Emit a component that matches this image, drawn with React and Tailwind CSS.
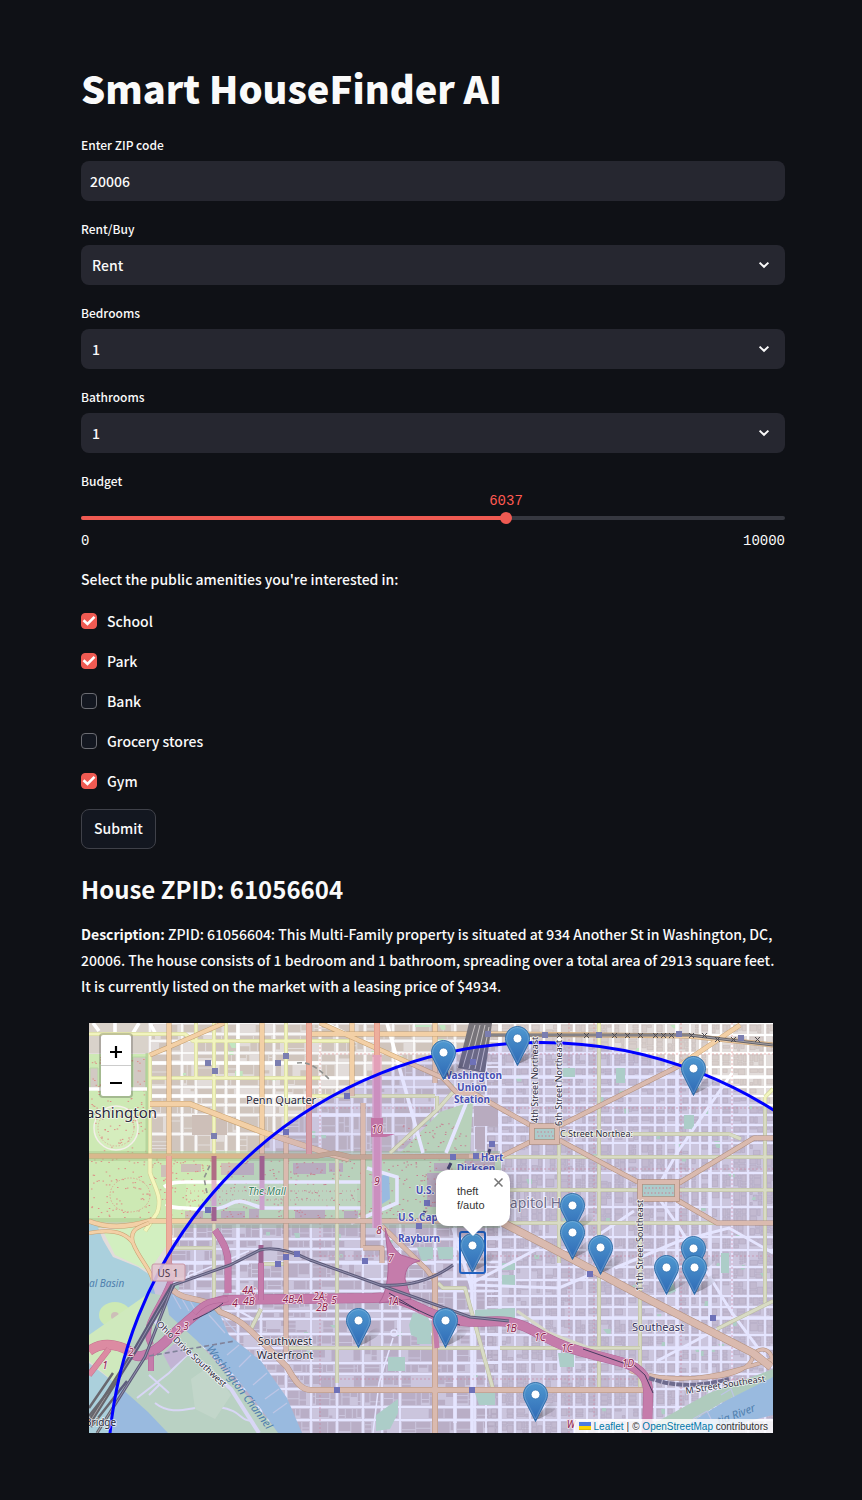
import { useState } from "react";

const bodyFont = "font-['Noto_Sans_CJK_SC',sans-serif]";

/* ---------- form controls ---------- */

function Field({ id, label, children }) {
  return (
    <div className="flex flex-col gap-1">
      <label htmlFor={id} className="text-[12px] font-medium leading-6">
        {label}
      </label>
      {children}
    </div>
  );
}

function SelectField({ id, label, options }) {
  return (
    <Field id={id} label={label}>
      <div className="relative">
        <select
          id={id}
          className="h-10 w-full appearance-none rounded-lg bg-[#262730] pl-[11px] pr-10 text-[14px] font-medium text-[#fafafa] outline-none"
        >
          {options.map((o) => (
            <option key={o}>{o}</option>
          ))}
        </select>
        <svg
          className="pointer-events-none absolute right-[13px] top-3 size-4"
          viewBox="0 0 16 16"
          fill="none"
          stroke="#fafafa"
          strokeWidth="2"
          aria-hidden="true"
        >
          <path d="M3.600 5.600 8 9.800l4.400-4.200" />
        </svg>
      </div>
    </Field>
  );
}

function BudgetSlider() {
  const max = 10000;
  const [value, setValue] = useState(6037);
  const pct = `${(value / max) * 100}%`;
  return (
    <div>
      <label htmlFor="budget" className="block text-[12px] font-medium leading-6">
        Budget
      </label>
      <div className="relative h-4 font-['Liberation_Mono',monospace] text-[14px] leading-4 text-[#ff5a52]">
        <output htmlFor="budget" className="absolute top-0 -translate-x-1/2" style={{ left: pct }}>
          {value}
        </output>
      </div>
      <div className="relative mt-[7px] h-1 rounded-full bg-[#363840]">
        <div className="h-1 rounded-full bg-[#ef5a52]" style={{ width: pct }} />
        <input
          id="budget"
          type="range"
          min="0"
          max={max}
          value={value}
          onChange={(e) => setValue(Number(e.target.value))}
          className="absolute -left-1.5 -top-1 h-3 w-[calc(100%+12px)] appearance-none bg-transparent outline-none [&::-webkit-slider-thumb]:size-3 [&::-webkit-slider-thumb]:appearance-none [&::-webkit-slider-thumb]:rounded-full [&::-webkit-slider-thumb]:bg-[#ef5a52]"
        />
      </div>
      <div className="mt-[13px] flex justify-between font-['Liberation_Mono',monospace] text-[14px] leading-4">
        <span>0</span>
        <span>{max}</span>
      </div>
    </div>
  );
}

function Check({ label, checked }) {
  return (
    <label className="flex h-6 items-center gap-[10px] text-[14px] font-medium">
      <span className="relative flex size-4">
        <input
          type="checkbox"
          defaultChecked={checked}
          className="peer size-4 appearance-none rounded border border-[#6b6c72] bg-[#131720] checked:border-[#ef5a52] checked:bg-[#ef5a52]"
        />
        <svg
          className="pointer-events-none absolute inset-0 hidden size-4 peer-checked:block"
          viewBox="0 0 16 16"
          fill="none"
          stroke="#fff"
          strokeWidth="2.600"
          aria-hidden="true"
        >
          <path d="M2.500 7.200 6.500 10.900 13.500 3.900" />
        </svg>
      </span>
      {label}
    </label>
  );
}

/* ---------- map drawing ---------- */

function makeRandom(seed) {
  let s = seed;
  return () => {
    s = (s * 16807) % 2147483647;
    return s / 2147483647;
  };
}

// Fills the cells of a street grid with small building footprints.
function buildings(xs, ys, seed, step) {
  const rnd = makeRandom(seed);
  let d = "";
  for (let i = 0; i < xs.length - 1; i++) {
    for (let j = 0; j < ys.length - 1; j++) {
      const x0 = xs[i] + 2;
      const x1 = xs[i + 1] - 2;
      const y0 = ys[j] + 2;
      const y1 = ys[j + 1] - 2;
      for (let x = x0; x < x1 - 2; ) {
        const w = Math.min(2 + rnd() * step, x1 - x);
        for (let y = y0; y < y1 - 2; ) {
          const h = Math.min(2 + rnd() * step, y1 - y);
          if (rnd() > 0.16) d += `M${x.toFixed(1)} ${y.toFixed(1)}h${w.toFixed(1)}v${h.toFixed(1)}h${(-w).toFixed(1)}z`;
          y += h + 1;
        }
        x += w + 1;
      }
    }
  }
  return d;
}

const dtGridX = [61, 80, 93, 107, 125, 137, 149, 173, 185, 197, 220, 231, 248, 263, 276, 288, 304, 325, 346, 366, 386, 411];
const dtGridY = [0, 11, 18, 30, 40, 55, 64, 73, 82, 92, 111, 131];
const eastX = [397, 411, 426, 441, 455, 470, 485, 498, 510, 524, 538, 551, 566, 577, 588, 601, 611, 621, 632, 643, 659, 676, 690];
const eastY = [0, 12, 30, 44, 54, 64, 73, 82, 92, 102, 111, 120, 134, 150, 167, 184, 200, 214, 227, 244, 257, 273, 284, 295, 312, 325, 339, 351, 366, 384, 397, 412];
const swX = [80, 106, 125, 149, 172, 197, 222, 248, 274, 293, 311, 346, 366, 386, 411];
const swY = [200, 216, 226, 239, 256, 268, 288, 296, 311, 325, 340, 351, 366, 384, 397, 412];

const eastBuildings = buildings(eastX, eastY, 77, 6);
const dtBuildings = buildings(dtGridX, dtGridY, 31, 17);
const swBuildings = buildings(swX, swY, 58, 13);

const grid = (xs, ys, x0, x1, y0, y1) =>
  xs.map((x) => `M${x} ${y0}V${y1}`).join("") + ys.map((y) => `M${x0} ${y}H${x1}`).join("");

const major = {
  motorway: ["#c4708c", "#dc8ba2"],
  trunk: ["#d99080", "#edae9d"],
  primary: ["#c6a070", "#f3d0a6"],
  secondary: ["#cdcf92", "#f1f4be"],
};

function Road({ kind, d, w = 4 }) {
  const [edge, fill] = major[kind];
  return (
    <g fill="none" strokeLinejoin="round">
      <path d={d} stroke={edge} strokeWidth={w + 1} />
      <path d={d} stroke={fill} strokeWidth={w} />
    </g>
  );
}

function Rail({ d, w = 3 }) {
  return (
    <g fill="none">
      <path d={d} stroke="#67656b" strokeWidth={w} />
      <path d={d} stroke="#b4b0b4" strokeWidth="0.800" />
    </g>
  );
}

const stations = [
  [119, 40], [126, 48], [189, 40], [197, 33], [125, 113], [197, 109], [119, 187], [258, 73], [384, 39],
  [403, 121], [364, 134], [387, 133], [338, 180], [330, 203], [276, 238], [248, 367], [383, 367],
  [197, 234], [208, 231], [189, 241], [501, 251], [624, 295], [456, 12], [510, 12], [590, 11], [652, 15], [399, 11],
];

const railCrosses = [470, 497, 525, 538, 551, 566, 574, 582, 602, 615, 628, 644, 668];

const trees = (() => {
  const rnd = makeRandom(19);
  const areas = [[2, 136, 275, 196], [280, 136, 408, 198], [2, 34, 56, 130], [312, 100, 380, 130], [60, 330, 150, 408], [12, 284, 40, 302]];
  let d = "";
  areas.forEach(([a, b, c, e]) => {
    const n = ((c - a) * (e - b)) / 45;
    for (let i = 0; i < n; i++) {
      d += `M${(a + rnd() * (c - a)).toFixed(1)} ${(b + rnd() * (e - b)).toFixed(1)}h1.500`;
    }
  });
  return d;
})();

const greens = (() => {
  const rnd = makeRandom(43);
  let d = "";
  for (let i = 0; i < 90; i++) {
    const x = 85 + rnd() * 590;
    const y = rnd() * 400;
    if (x < 280 && y > 130 && y < 200) continue;
    d += `M${x.toFixed(0)} ${y.toFixed(0)}h${(2 + rnd() * 6).toFixed(1)}v${(2 + rnd() * 5).toFixed(1)}h-4z`;
  }
  return d;
})();

function StreetMap() {
  return (
    <svg
      className="absolute inset-0 size-full font-['Noto_Sans',sans-serif]"
      viewBox="0 0 684 410"
      preserveAspectRatio="xMinYMin slice"
      role="img"
      aria-label="Street map of central Washington"
    >
      <rect width="684" height="410" fill="#e2dcda" />

      {/* blocks and minor streets */}
      <path d={dtBuildings} fill="#d0c5bd" />
      <path d={swBuildings} fill="#cec2c0" />
      <path d={eastBuildings} fill="#d8cecb" stroke="#c4b8b6" strokeWidth="0.500" />
      <path d={greens} fill="#c2e6c0" />
      <g fill="none" stroke="#fff">
        <path d={grid(eastX, eastY, 397, 684, 0, 410)} strokeWidth="1.800" />
        <path d={grid([411, 470, 588, 621], [54, 295, 325], 397, 684, 0, 410)} strokeWidth="3.600" />
        <path d={grid(dtGridX, dtGridY, 61, 411, 0, 131)} strokeWidth="1.500" />
        <path d="M149 0V131M61 40H231M61 73H231M222 92H411M222 55H411" strokeWidth="3.600" />
        <path d={grid(swX, swY, 80, 411, 200, 410)} strokeWidth="1.800" />
        <path d="M149 200V285M366 200V400M248 240H346M84 240H160M383 250V410" strokeWidth="3.600" />
      </g>
      <path d={grid([592, 643, 505, 231, 480], [31, 85, 146, 233, 356], 231, 684, 0, 410)} fill="none" stroke="#e39a9a" strokeWidth="0.700" strokeDasharray="2 2" />

      {/* parks */}
      <g fill="#cde9b4">
        <path d="M0 31H59V131H0z" />
        <path d="M0 135H278V199H0z" />
        <path d="M278 135H412V200H278z" />
        <path d="M311 130 351 89 384 78 381 130z" />
      </g>
      <g fill="#c0e5c2">
        <path d="M328 224h16v12h-12zM348 224h16v12h-14zM320 302l4-12 14 2 6 14-8 12-14-6zM328 310h14v11h-14zM299 334h17v14h-17zM287 392l22-16v14l-8 16-14 2z" />
        <path d="M413 240h13v7h-13zM413 252h13v10h-13zM386 287l40-2v10l-40 2zM386 370h20v12h-16zM469 330h16v14h-14zM474 45h12v9h-12zM527 45h9v15h-9zM595 92h10v14h-10zM632 230h8v20h-8zM583 258l4 10-8 4zM326 2h16v2h-16z" />
      </g>
      <path d="M0 0H59V30H0z" fill="#d9d2ca" />
      <path d="M1 45h8v22h-8zM44 34h13v34h-13z" fill="#d2c9c3" stroke="#b7dba4" />
      <circle cx="27" cy="105" r="22" fill="#d5edbd" stroke="#f3efe9" strokeWidth="1.500" />
      <circle cx="27" cy="105" r="18" fill="none" stroke="#dd9c8c" strokeWidth="0.700" strokeDasharray="1.500 1.500" />
      <ellipse cx="41" cy="172" rx="20" ry="17" fill="none" stroke="#dd9c8c" strokeWidth="0.800" strokeDasharray="1.500 1.500" />
      <g fill="#cdbfb8">
        <path d="M92 141h20v8h-20zM132 140h33v12h-33zM204 140h33v11h-33zM72 142h8v12h-8zM96 188h18v8h-18zM132 188h24v7h-24zM206 187h30v9h-30zM160 186h10v10h-10zM338 150h28v34h-28zM345 140h16v8h-16zM376 136h30v14h-30zM240 140h14v9h-14zM255 188h14v8h-14z" />
        <path d="M385 83h24v20h-24zM386 104h10v22h-10zM103 92h24v20h-24zM118 96h20v16h-20z" />
      </g>
      <path d="M97 160h171v25H97z" fill="#d3edb9" />
      <path d="M97 168h171M97 177h171" stroke="#dd9c8c" strokeWidth="0.700" strokeDasharray="1 3" />
      <path d={trees} stroke="#de8f86" strokeWidth="1" />
      <path d="M0 133H411M0 200H411" stroke="#a9c98e" strokeWidth="10" opacity="0.500" />
      <path d="M59 30V133" stroke="#a9c98e" strokeWidth="5" opacity="0.600" />

      {/* water */}
      <g fill="#aad0dd">
        <path d="M0 197H6L14 217 24 234 49 244 61 252 67 274 48 304 41 312 0 314z" />
        <path d="M292 153 300 150 301 176 293 181z" />
      </g>
      <path d="M61 200 14 208 26 232 60 248 78 222 80 200z" fill="#d2efc0" />
      <ellipse cx="26" cy="292" rx="16" ry="13" fill="#cde9b4" />
      <circle cx="26" cy="293" r="4" fill="#cdbfb8" />
      <path d="M0 312 60 270 78 273 110 320 160 375 190 410 78 410 31 364 0 338z" fill="#cfe9bd" />
      <g fill="#abd0dc">
        <path d="M76 270 108 276 130 290 140 312 172 338 198 375 213 410H189L172 386 145 352 105 315 80 292z" />
        <path d="M0 340 31 364 59 389 79 410H0z" />
        <path d="M584 410 638 377 684 352V392L652 400 640 410z" />
      </g>
      <path d="M566 400 620 370 684 346V354L632 380 584 410H560z" fill="#c3e2b6" />
      <g stroke="#d3dce2" strokeWidth="1.200" fill="none">
        <path d="M120 292l16 18M128 288l20 22M150 322l-12 10M162 332l-12 12M178 350l-14 12M190 366l-14 10M198 380l-14 10M604 396l14-8 4 8M632 372l10-6 3 8" />
        <path d="M84 272l8 14M92 274l8 14M100 276l8 14" />
      </g>
      <path d="M66 298 100 330 142 366 170 410" stroke="#f1eff4" strokeWidth="4" fill="none" />
      <path d="M48 375 80 350 102 328M66 380c20 16 40 0 64 4s20 14 34 14M60 352 80 370M70 362l-10 10" stroke="#f1eff4" strokeWidth="2" fill="none" />
      <path d="M74 331 88 318 98 332 82 346z" fill="#d8c9d0" />
      <path d="M102 356l20-14 20 30-16 24-20-10z" fill="#d9efc4" />

      {/* white avenues */}
      <g fill="none" stroke="#fff" strokeWidth="3.600">
        <path d="M298 0 334 130M236 0 276 20M378 78 357 130M364 205 383 266M61 0 66 10M0 66H58M26 0V10M4 0l6 8M50 0l-6 10" />
        <path d="M97 159H274M97 185c20 2 34 2 44-4 14-8 24 5 38 4H274M97 159c-8 0-16 0-22 5M97 185c-8 0-16 0-20-4M278 145 308 154V180L262 200" />
        <path d="M505 215 545 188M571 177 590 204 643 290 684 345M571 160 588 130 643 50M526 245 590 218 640 205 684 230M383 260 450 225M385 262 470 265 510 248M568 338 640 300" strokeWidth="3" />
      </g>
      <g fill="none" stroke="#fff" strokeWidth="1.500">
        <path d="M80 262 102 252 160 228M146 285 168 298 149 288zM304 315 290 360 284 410M309 296v14" />
        <circle cx="103" cy="252" r="4" />
        <circle cx="305" cy="310" r="3" />
      </g>

      {/* secondary roads */}
      <Road kind="secondary" w={3} d="M0 11H96L104 18H231M61 55H231M61 30V131M107 0V55M125 0V131M137 0V55M197 0V110M221 18H263M221 73H346" />
      <Road kind="secondary" w={3} d="M510 0V366M470 121V240M551 178V366M676 74V280M470 111H640L652 116M411 134H684M411 167H549M590 167H684M411 200H684M676 74 684 66" />
      <Road kind="secondary" w={3} d="M301 130 348 87 364 69M348 87V73M248 135V360M125 200V275M80 225H125M170 241H197M198 325H391M349 260 354 265H376L404 366M411 325H551M172 286 160 310M628 306 684 278" />
      <path d="M61 131V150C66 165 74 175 68 190L56 208" stroke="#cdcf92" strokeWidth="4.500" fill="none" />
      <path d="M61 131V150C66 165 74 175 68 190L56 208" stroke="#f4f6bd" strokeWidth="3.500" fill="none" />
      <path d="M428 288 460 310 500 325" stroke="#eef0c0" strokeWidth="3" fill="none" />

      {/* primary roads */}
      <Road kind="primary" w={4} d="M80 0V131M173 0V131M197 110V330M263 0V73M274 80V225M346 0V60M61 32 80 24 135 0" />
      <Road kind="primary" w={5} d="M61 81H101L173 109 241 131 260 136" />
      <Road kind="primary" w={4} d="M221 11H411L600 13 684 22M231 0 354 55 368 70H384L441 102M470 103 588 44 651 2M413 133 441 119M470 117 549 159M590 160 665 115H684M588 177 628 200H684" />
      <Road kind="primary" w={4} d="M0 133H228L245 130 262 134 411 133M0 198C20 206 40 204 60 198H411M293 203 338 247 346 258M274 225H293V240" />
      <Road kind="primary" w={5} d="M84 267C96 280 118 272 131 289 150 296 158 304 168 314L198 344C206 358 212 367 222 367H555M346 250V410" />
      <Road kind="primary" w={3} d="M541 348C560 356 600 356 624 354S661 344 664 334 682 322 684 340M0 210C20 206 36 208 44 220 50 236 62 246 64 258M44 220C40 206 50 204 60 200M560 352C600 362 640 350 684 336" />
      <Road kind="primary" w={7} d="M414 200 451 219 551 272 664 330 682 344" />
      <path d="M443 103H468V119H443zM551 159H588V176H551z" fill="#c0e3c6" stroke="#c6a070" strokeWidth="5.500" />
      <path d="M443 103H468V119H443zM551 159H588V176H551z" fill="none" stroke="#f3d0a6" strokeWidth="4" />
      <path d="M448 109h15M449 113h16M556 165h28M555 170h30" stroke="#de8f86" strokeWidth="1.200" strokeDasharray="1.500 2" />
      <path d="M0 133H228L245 130 262 134 380 133" stroke="#a88c5f" strokeWidth="4" opacity="0.350" fill="none" />

      {/* trunk roads and freeways */}
      <Road kind="trunk" w={5} d="M80 133V258M220 0V131M288 0V40" />
      <path d="M288 32V205" stroke="#e3a0b8" strokeWidth="9" fill="none" />
      <path d="M284 34V205M292 34V205" stroke="#f0c9d6" strokeWidth="1" fill="none" />
      <Road kind="motorway" w={6} d="M126 207C136 222 140 230 139 245V270" />
      <path d="M125 133v24M125 184v14M173 133v24M172 222v20" stroke="#b06c84" strokeWidth="5" />
      <path d="M125 157v26M173 157v30" stroke="#e3b6c8" strokeWidth="5" />
      <path d="M282 95h12v16h12l-9 3h-15z" fill="#d8829c" />
      <Road kind="motorway" w={9} d="M0 328C16 316 36 324 44 331S70 326 81 314C95 302 112 282 136 277L284 275C312 272 330 286 344 291 380 304 400 296 420 299 440 302 451 314 478 324 500 332 526 336 541 342 558 350 560 362 559 376L558 410" />
      <Road kind="motorway" w={5} d="M172 240V277M62 330V348M84 250C78 280 50 300 62 322M0 352 20 326M105 290C118 276 126 278 139 276" />
      <path d="M296 205C300 218 304 226 312 232L331 238C320 240 316 246 316 256L322 276 290 280C298 270 300 250 299 234z" fill="#dc8ba2" stroke="#c4708c" />
      <path d="M345 290 348 325" stroke="#dc8ba2" strokeWidth="5" />
      <path d="M309 278 344 294 371 302M300 270 330 288M494 326 540 342M104 297C120 290 130 284 134 280M545 342 556 352 564 370" stroke="#3f3a45" strokeWidth="0.900" fill="none" />

      {/* railways */}
      <Rail w={5} d="M0 400 48 324 84 262" />
      <Rail w={3} d="M8 410 56 334 84 262 141 242 171 227Q190 222 221 237L291 262 381 294 420 298" />
      <Rail w={3} d="M291 262C320 264 345 256 364 242" />
      <path d="M0 385 24 350M0 393 32 352M2 404 38 358" stroke="#69686f" strokeWidth="2.500" />
      <path d="M369 45 380 0H403L396 50z" fill="#77747a" />
      <path d="M374 44 386 2M380 46 391 2M386 46 396 2M391 48 400 4" stroke="#c9c4c6" strokeWidth="1" />
      <Rail w={3} d="M400 12H600L684 22" />
      <path d="M560 355C585 364 610 364 640 356" stroke="#7b7882" strokeWidth="4" strokeDasharray="6 1" fill="none" />
      <path d="M208 40C222 38 232 48 242 58M118 170 115 155 122 140M60 333 146 318" stroke="#8f918f" strokeWidth="1.600" strokeDasharray="5 3" fill="none" />
      {railCrosses.map((x) => (
        <path key={x} d={`M${x - 2} ${x > 620 ? 14 : 10}l5 5m0-5l-5 5`} stroke="#4e4b50" strokeWidth="1" />
      ))}

      {stations.map(([x, y]) => (
        <rect key={`${x}-${y}`} x={x - 3} y={y - 3} width="6" height="6" fill="#7b7eb0" />
      ))}
      <path d="M401 126l-2 6M362 140l-3 6M336 188l-2 5" stroke="#4a4a60" strokeWidth="3" />

      {/* search radius */}
      <circle cx="452" cy="452.500" r="433" fill="#0000ff" fillOpacity="0.100" stroke="#0000ff" strokeWidth="3" />

      {/* labels */}
      <g paintOrder="stroke" stroke="#ffffff" strokeOpacity="0.750" strokeWidth="1.600" strokeLinejoin="round" fill="#2b2a3c">
        <g fontSize="11">
          <text x="157" y="81">Penn Quarter</text>
          <text x="569" y="308" textAnchor="middle" fill="#34325c">Southeast</text>
          <text x="196" y="322" textAnchor="middle">Southwest</text>
          <text x="196" y="336" textAnchor="middle">Waterfront</text>
          <text x="-4" y="403" fontSize="10">Bridge</text>
        </g>
        <text x="-3" y="95" fontSize="15">ashington</text>
        <text x="412" y="185" fontSize="14" fill="#6c6a8a">Capitol H</text>
        <g fontSize="9">
          <text x="471" y="114">C Street Northea:</text>
          <text transform="translate(449 100) rotate(-90)">4th Street Northeast</text>
          <text transform="translate(473 103) rotate(-90)">6th Street Northeast</text>
          <text transform="translate(554 268) rotate(-90)">11th Street Southeast</text>
          <text transform="translate(597 371) rotate(-9)">M Street Southeast</text>
          <text transform="translate(67 302) rotate(43)">Ohio Drive Southwest</text>
        </g>
        <g fontSize="10" fontWeight="700" fill="#4650b4" textAnchor="middle">
          <text x="383" y="56">Washington</text>
          <text x="383" y="68">Union</text>
          <text x="383" y="80">Station</text>
          <text x="403" y="138">Hart</text>
          <text x="387" y="149">Dirksen</text>
          <text x="336" y="171">U.S.</text>
          <text x="330" y="219">Rayburn</text>
          <text x="309" y="198" textAnchor="start">U.S. Cap</text>
        </g>
        <text x="178" y="172" fontSize="10" fontStyle="italic" textAnchor="middle" fill="#38805f">The Mall</text>
      </g>
      <g fontStyle="italic" fontSize="10" fill="#4f7fae">
        <text x="0" y="264">al Basin</text>
        <text transform="translate(117 326) rotate(53)" fontSize="11">Washington Channel</text>
        <text transform="translate(630 402) rotate(-21)" fontSize="11">tia River</text>
      </g>
      <rect x="63" y="241" width="33" height="17" rx="2" fill="#e2c6cf" fillOpacity="0.900" stroke="#c795a4" />
      <text x="79" y="254" fontSize="10" textAnchor="middle" fill="#4a3447">US 1</text>
      <g fontStyle="italic" fontSize="10" textAnchor="middle" fill="#8d1f4c" paintOrder="stroke" stroke="#f3dfea" strokeWidth="1.600">
        {[
          ["10", 288, 110], ["9", 288, 162], ["8", 290, 211], ["7", 302, 239], ["1A", 304, 282], ["5", 245, 281],
          ["2A;", 231, 277], ["2B", 233, 288], ["4B-A", 204, 280], ["4A;", 160, 271], ["4B", 160, 282], ["4", 146, 284],
          ["3", 97, 307], ["2", 89, 311], ["2", 42, 333], ["1", 16, 346], ["1B", 422, 309], ["1C", 451, 318],
          ["1C", 478, 329], ["1D", 539, 344], ["W", 482, 405],
        ].map(([t, x, y]) => (
          <text key={`${t}${x}`} x={x} y={y}>
            {t}
          </text>
        ))}
      </g>
    </svg>
  );
}

// Centre of each pin's white dot, in map pixels.
const pins = [
  [428, 15], [354, 29], [604, 45], [483, 182], [483, 209], [383, 222], [511, 224], [604, 225],
  [577, 244], [605, 244], [269, 297], [356, 297], [446, 371],
];

function Pin({ x, y, index }) {
  const selected = x === 383;
  return (
    <button
      type="button"
      aria-label={`Incident ${index + 1}`}
      className={
        selected
          ? "absolute h-[43px] w-[27px] rounded-[3px] border-2 border-[#1f5fc0]"
          : "absolute h-[43px] w-[27px] border-2 border-transparent"
      }
      style={{ left: x - 13, top: y - 14 }}
    >
      <svg className="-ml-px h-[41px] w-[25px] max-w-none overflow-visible" viewBox="0 0 25 41" aria-hidden="true">
        <defs>
          <linearGradient id="pinFill" x1="0" y1="0" x2="0" y2="1">
            <stop offset="0" stopColor="#4f98d0" />
            <stop offset="1" stopColor="#2e69b5" />
          </linearGradient>
          <linearGradient id="pinShade" x1="0" y1="1" x2="1" y2="0">
            <stop offset="0" stopColor="#000" stopOpacity="0.350" />
            <stop offset="1" stopColor="#000" stopOpacity="0" />
          </linearGradient>
        </defs>
        <path d="M12.500 38C18 30 25 20 31 20c6 1 2 8-4 11-5 3-9 5-14.500 7z" fill="url(#pinShade)" />
        <path
          d="M12.500.5C5.900.5.5 5.900.5 12.500c0 2.700.7 4.800 2.200 7.500L12.500 39.500 22.300 20c1.500-2.700 2.200-4.800 2.200-7.500C24.500 5.900 19.100.5 12.500.5z"
          fill="url(#pinFill)"
          stroke="#2e6ca6"
          strokeWidth="0.900"
        />
        <path
          d="M12.500 1.600C6.500 1.600 1.600 6.500 1.600 12.500c0 2.500.7 4.500 2.100 7L12.500 37 21.300 19.500c1.400-2.500 2.100-4.500 2.100-7C23.400 6.500 18.500 1.600 12.500 1.600z"
          fill="none"
          stroke="#fff"
          strokeOpacity="0.180"
        />
        <circle cx="12.500" cy="12.500" r="4.400" fill="#fff" stroke="#2f6fae" strokeWidth="0.700" />
      </svg>
    </button>
  );
}

function CrimeMap() {
  return (
    <section aria-label="Map" className="relative h-[410px] overflow-hidden bg-[#ddd] font-['Liberation_Sans',sans-serif] text-black">
      <StreetMap />
      {pins.map(([x, y], i) => (
        <Pin key={`${x}-${y}`} x={x} y={y} index={i} />
      ))}

      <div className="absolute left-[347px] top-[147px] h-14 w-[74px] rounded-xl bg-white shadow-[0_3px_14px_rgba(0,0,0,0.3)]">
        <p className="pl-[21px] pt-[14px] text-[11px] leading-[14px] text-[#333]">
          theft
          <br />
          f/auto
        </p>
        <button type="button" aria-label="Close popup" className="absolute right-1 top-1 flex size-4 items-center justify-center">
          <svg className="size-[9px]" viewBox="0 0 9 9" stroke="#757575" strokeWidth="1.500" aria-hidden="true">
            <path d="M.5.5l8 8M8.500.5l-8 8" />
          </svg>
        </button>
        <svg className="absolute left-[25px] top-[56px] h-[10px] w-6" viewBox="0 0 24 10" aria-hidden="true">
          <path d="M2 0H22L12.500 9.500Q12 10 11.500 9.500z" fill="#fff" />
        </svg>
      </div>

      <div className="absolute left-[10px] top-[10px] flex w-[34px] flex-col overflow-hidden rounded border-2 border-black/20 bg-white bg-clip-padding">
        <button type="button" aria-label="Zoom in" className="flex h-[31px] items-center justify-center border-b border-[#ccc] pt-[3px]">
          <svg className="size-3" viewBox="0 0 12 12" stroke="#000" strokeWidth="2.200" aria-hidden="true">
            <path d="M0 6H12M6 0V12" />
          </svg>
        </button>
        <button type="button" aria-label="Zoom out" className="flex h-[30px] items-center justify-center pt-[3px]">
          <svg className="size-3" viewBox="0 0 12 12" stroke="#000" strokeWidth="2.200" aria-hidden="true">
            <path d="M0 6H12" />
          </svg>
        </button>
      </div>

      <div className="absolute bottom-0 right-0 flex h-[14px] items-center gap-[3px] bg-white/80 px-[5px] text-[10px] text-[#333]">
        <svg className="h-2 w-3" viewBox="0 0 12 8" aria-hidden="true">
          <path fill="#4C7BE1" d="M0 0h12v4H0z" />
          <path fill="#FFD500" d="M0 4h12v3H0z" />
          <path fill="#E0BC00" d="M0 7h12v1H0z" />
        </svg>
        <a href="#leaflet" className="text-[#0078a8]">Leaflet</a>
        <span>|</span>
        <span>
          © <a href="#osm" className="text-[#0078a8]">OpenStreetMap</a> contributors
        </span>
      </div>
    </section>
  );
}

/* ---------- page ---------- */

export default function App() {
  return (
    <div className={`min-h-screen bg-[#0f1116] pb-[67px] pl-[81px] pr-[77px] pt-[60px] text-[#fafafa] ${bodyFont}`}>
      <main className="mx-auto max-w-[704px]">
        <h1 className="text-[38px] font-black leading-[56px]">Smart HouseFinder AI</h1>

        <form className="mt-[17px] flex flex-col gap-4" onSubmit={(e) => e.preventDefault()}>
          <Field id="zip" label="Enter ZIP code">
            <input
              id="zip"
              type="text"
              defaultValue="20006"
              className="h-10 w-full rounded-lg bg-[#262730] px-[9px] text-[14px] font-medium outline-none"
            />
          </Field>
          <SelectField id="mode" label="Rent/Buy" options={["Rent", "Buy"]} />
          <SelectField id="bedrooms" label="Bedrooms" options={["1", "2", "3", "4"]} />
          <SelectField id="bathrooms" label="Bathrooms" options={["1", "2", "3", "4"]} />
          <BudgetSlider />
          <fieldset className="mt-[2px] flex flex-col gap-4">
            <legend className="mb-[18px] text-[14px] font-medium leading-6">
              Select the public amenities you're interested in:
            </legend>
            <Check label="School" checked />
            <Check label="Park" checked />
            <Check label="Bank" />
            <Check label="Grocery stores" />
            <Check label="Gym" checked />
          </fieldset>
          <button
            type="submit"
            className="h-10 self-start rounded-lg border border-[#3f4149] bg-[#131720] px-3 pb-[2px] text-[14px] font-medium"
          >
            Submit
          </button>
        </form>

        <h2 className="mt-[20px] text-[24px] font-bold leading-10">House ZPID: 61056604</h2>
        <p className="mt-3 text-[14px] font-medium leading-[26px]">
          <strong className="font-bold">Description:</strong> ZPID: 61056604: This Multi-Family property is situated at 934 Another St in
          Washington, DC, 20006. The house consists of 1 bedroom and 1 bathroom, spreading over a total area of 2913
          square feet. It is currently listed on the market with a leasing price of $4934.
        </p>
        <div className="mt-6 pl-2 pr-3">
          <CrimeMap />
        </div>
      </main>
    </div>
  );
}
